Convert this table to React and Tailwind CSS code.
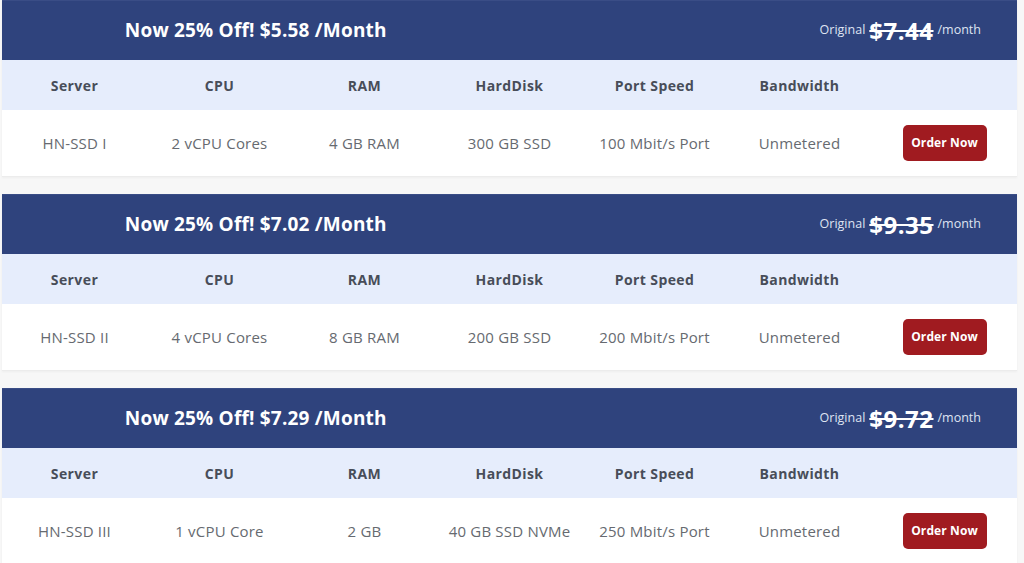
import React from "react";

const plans = [
  { price: "$5.58", original: "$7.44", name: "HN-SSD I", cpu: "2 vCPU Cores", ram: "4 GB RAM", disk: "300 GB SSD", port: "100 Mbit/s Port" },
  { price: "$7.02", original: "$9.35", name: "HN-SSD II", cpu: "4 vCPU Cores", ram: "8 GB RAM", disk: "200 GB SSD", port: "200 Mbit/s Port" },
  { price: "$7.29", original: "$9.72", name: "HN-SSD III", cpu: "1 vCPU Core", ram: "2 GB", disk: "40 GB SSD NVMe", port: "250 Mbit/s Port" },
];

const labels = ["Server", "CPU", "RAM", "HardDisk", "Port Speed", "Bandwidth"];

const PlanCard = ({ plan }) => (
  <div className="w-[1015px] ml-[2px] bg-white border-b border-[#ececec] shadow-[0_1px_2px_rgba(0,0,0,0.04)]">
    {/* Price header */}
    <div className="h-[60px] bg-[#2f437d] grid grid-cols-2 items-center text-white border-t border-[#3a4d86]">
      <h2 className="text-center text-[19px] font-bold tracking-[0.2px]">
        Now 25% Off! {plan.price} /Month
      </h2>
      <div className="flex items-center justify-end gap-1 pr-[36px]">
        <span className="text-[12.5px] text-[#dfe4f2]">Original</span>
        <span className="text-[24px] font-bold line-through decoration-2 leading-none tracking-[0.5px]">{plan.original}</span>
        <span className="text-[12.5px] text-[#dfe4f2]">/month</span>
      </div>
    </div>

    {/* Column labels */}
    <div className="h-[50px] bg-[#e6edfc] grid grid-cols-7 items-center">
      {labels.map((l) => (
        <div key={l} className="text-center text-[14px] font-bold text-[#484d59] tracking-[0.4px]">
          {l}
        </div>
      ))}
      <div />
    </div>

    {/* Values */}
    <div className="h-[66px] grid grid-cols-7 items-center text-[15px] text-[#666a70] tracking-[0.2px]">
      <div className="text-center">{plan.name}</div>
      <div className="text-center">{plan.cpu}</div>
      <div className="text-center">{plan.ram}</div>
      <div className="text-center">{plan.disk}</div>
      <div className="text-center">{plan.port}</div>
      <div className="text-center">Unmetered</div>
      <div className="flex justify-center">
        <button className="w-[84px] h-[36px] rounded-[5px] bg-[#a01b20] text-white text-[12px] font-bold tracking-[0.1px]">
          Order Now
        </button>
      </div>
    </div>
  </div>
);

export default function App() {
  return (
    <div className="min-h-[563px] bg-[#f7f7f7] flex flex-col gap-[17px] font-['Open_Sans',sans-serif] overflow-hidden">
      {plans.map((p) => (
        <PlanCard key={p.name} plan={p} />
      ))}
    </div>
  );
}
